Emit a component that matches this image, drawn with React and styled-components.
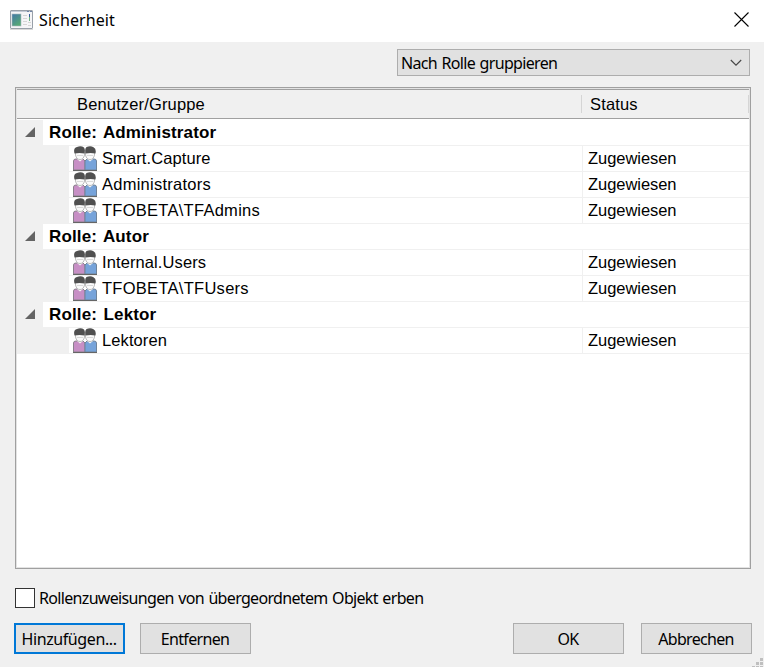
import React, { useState } from 'react';
import styled, { createGlobalStyle } from 'styled-components';

const GlobalStyle = createGlobalStyle`
  * {
    box-sizing: border-box;
  }

  body {
    margin: 0;
    background-color: #f0f0f0;
    overflow: hidden;
  }
`;

const Dialog = styled.div`
  width: 764px;
  height: 667px;
  background-color: #f0f0f0;
  color: #000;
  display: flex;
  flex-direction: column;
  position: relative;
  overflow: hidden;
  font-family: 'Noto Sans', 'Open Sans', sans-serif;
  font-size: 16px;
  white-space: nowrap;
`;

const TitleBar = styled.div`
  height: 42px;
  flex: none;
  background-color: #fff;
  display: flex;
  align-items: center;
  padding: 0 14px 3px 10px;
`;

const Title = styled.div`
  flex: 1;
  margin-left: 5px;
  padding-top: 1px;
  line-height: 24px;
  letter-spacing: 0.1px;
`;

const CloseButton = styled.button`
  width: 17px;
  height: 17px;
  padding: 0;
  border: none;
  background: none;
  display: flex;
`;

const Toolbar = styled.div`
  display: flex;
  justify-content: flex-end;
  padding: 7px 14px 11px;
`;

const Select = styled.div`
  width: 353px;
  height: 27px;
  padding: 0 7px 0 3px;
  background-color: #e1e1e1;
  border: 1px solid #adadad;
  display: flex;
  align-items: center;
  justify-content: space-between;
`;

const Label = styled.span`
  line-height: 22px;
  letter-spacing: -0.67px;
  word-spacing: 1px;
`;

const Tree = styled.div`
  width: 736px;
  height: 482px;
  flex: none;
  margin-left: 15px;
  padding: 1px;
  background-color: #e3e3e3;
  border: 1px solid #a0a0a0;
  font-family: 'Liberation Sans', Arial, sans-serif;
  font-size: 16.5px;
`;

const TreeContent = styled.div`
  height: 100%;
  background-color: #fff;
`;

const HeaderRow = styled.div`
  height: 30px;
  margin-bottom: 1px;
  background-color: #f0f0f0;
  border-top: 1px solid #a0a0a0;
  border-bottom: 1px solid #a0a0a0;
  display: flex;
  align-items: center;
`;

const HeaderCell = styled.div`
  width: ${(props) => props.$width}px;
  height: 18px;
  padding-left: ${(props) => props.$indent}px;
  border-right: 1px solid #d5d5d5;
  line-height: 18px;
  letter-spacing: 0.15px;
`;

const Row = styled.div`
  height: 26px;
  display: flex;
`;

const Gutter = styled.div`
  width: ${(props) => props.$width}px;
  background-color: #f0f0f0;
  display: flex;
  align-items: center;
  padding: 0 0 2px 8px;
`;

const GroupName = styled.div`
  flex: 1;
  padding-left: 6px;
  border-bottom: 1px solid #f0f0f0;
  font-size: 17px;
  font-weight: bold;
  line-height: 25px;
  letter-spacing: 0.15px;
  word-spacing: 1.5px;
`;

const NameCell = styled.div`
  width: 514px;
  padding-left: 4px;
  border-right: 1px solid #f0f0f0;
  border-bottom: 1px solid #f0f0f0;
  display: flex;
  align-items: center;
  gap: 5px;
  line-height: 25px;
  letter-spacing: ${(props) => props.$spacing}px;
`;

const StatusCell = styled.div`
  flex: 1;
  padding-left: 5px;
  border-bottom: 1px solid #f0f0f0;
  line-height: 25px;
  letter-spacing: -0.05px;
`;

const InheritOption = styled.label`
  height: 20px;
  margin: 19px 0 15px 15px;
  display: flex;
  align-items: center;
  gap: 4px;
`;

const Checkbox = styled.input`
  appearance: none;
  width: 20px;
  height: 20px;
  margin: 0;
  background-color: #fff;
  border: 1px solid #333;

  &:checked {
    background-color: #333;
  }
`;

const Footer = styled.div`
  display: flex;
  padding: 0 12px 0 14px;
`;

const Button = styled.button`
  width: 111px;
  height: 31px;
  padding: 0 1px 0 0;
  margin-left: ${(props) => props.$gap || 0}px;
  background-color: #e1e1e1;
  border: ${(props) => (props.$primary ? '2px solid #0078d7' : '1px solid #adadad')};
  color: #000;
  font: inherit;
  line-height: 22px;
  letter-spacing: ${(props) => props.$spacing || 0}px;
`;

const SizeGrip = styled.svg`
  position: absolute;
  right: 0;
  bottom: 0;
`;

const WindowIcon = () => (
  <svg width="24" height="20" viewBox="0 0 24 20">
    <defs>
      <linearGradient id="pane" x1="0" y1="0" x2="0.6" y2="1">
        <stop offset="0" stopColor="#4277a8" />
        <stop offset="1" stopColor="#55a875" />
      </linearGradient>
    </defs>
    <rect x="0.5" y="0.5" width="22" height="18" rx="0.5" fill="#f5f5f7" stroke="#99a0a9" />
    <path d="M1 1.5h21" stroke="#c3cad5" />
    <path d="M17 1.5h2M20 1.5h2" stroke="#7186a8" />
    <rect x="2" y="4" width="9" height="12" fill="url(#pane)" stroke="#aab9bf" strokeWidth="0.6" />
    <path d="M13 5.5h4M13 8.5h4M13 11.5h4M13 14.5h4M18 12.5h3M18 15.5h3" stroke="#d5d5d5" />
    <path d="M19.5 4v3" stroke="#365d9b" />
    <path d="M19.5 7v4" stroke="#69b281" />
    <path d="M0 19.5h23" stroke="#d9d9d9" />
  </svg>
);

const CloseIcon = () => (
  <svg width="17" height="17" viewBox="0 0 17 17">
    <path d="M1.5 1.5l14 14M15.5 1.5l-14 14" stroke="#000" strokeWidth="1.1" />
  </svg>
);

const ChevronIcon = () => (
  <svg width="12" height="8" viewBox="0 0 12 8">
    <path d="M0.8 1l5.2 5.2L11.2 1" fill="none" stroke="#444" strokeWidth="1.1" />
  </svg>
);

const ExpandedIcon = () => (
  <svg width="10" height="10" viewBox="0 0 10 10">
    <path d="M10 0v10H0z" fill="#646464" />
  </svg>
);

const UsersIcon = () => (
  <svg width="24" height="25" viewBox="0 0 24 25">
    <path d="M0.5 24V15q0-2 2.5-2h7l2 2v9z" fill="#c78fc5" stroke="#8a808c" />
    <path d="M12 24V15l2-2h7q2.5 0 2.5 2v9z" fill="#76a3da" stroke="#6f8399" />
    <path d="M0 24.5h24" stroke="#666" />
    <path d="M4 13l3 2.5 3-2.5zM14 13l3 2.5 3-2.5z" fill="#f5f5f5" />
    <path d="M2.5 6v3q1 4.5 4.5 4.5t4.5-4.5V6z" fill="#fafafa" stroke="#bbb" />
    <path d="M12.5 6v3q1 4.5 4.5 4.5t4.5-4.5V6z" fill="#fafafa" stroke="#bbb" />
    <path d="M1.5 7.5Q0 2 4 1q4-1.5 7 .5 1.5 2 .5 6-5-1-10 0z" fill="#505050" />
    <path d="M12.5 7.5q-1-5 1-6.5 4-1.5 7 .2 3 1.300 2 6.300-5-1-10 0z" fill="#505050" />
    <path d="M4 9.500h6M14 9.500h6" stroke="#ccc" strokeWidth="0.7" />
  </svg>
);

const roles = [
  {
    name: 'Administrator',
    members: [
      { name: 'Smart.Capture', spacing: 0.1 },
      { name: 'Administrators', spacing: 0.25 },
      { name: 'TFOBETA\\TFAdmins', spacing: 0.27 },
    ],
  },
  {
    name: 'Autor',
    members: [
      { name: 'Internal.Users', spacing: 0.1 },
      { name: 'TFOBETA\\TFUsers', spacing: 0.28 },
    ],
  },
  {
    name: 'Lektor',
    members: [{ name: 'Lektoren', spacing: 0.1 }],
  },
];

const App = () => {
  const [inherit, setInherit] = useState(false);

  return (
    <Dialog>
      <GlobalStyle />
      <TitleBar>
        <WindowIcon />
        <Title>Sicherheit</Title>
        <CloseButton aria-label="Schließen">
          <CloseIcon />
        </CloseButton>
      </TitleBar>

      <Toolbar>
        <Select>
          <Label>Nach Rolle gruppieren</Label>
          <ChevronIcon />
        </Select>
      </Toolbar>

      <Tree>
        <TreeContent>
          <HeaderRow>
            <HeaderCell $width={565} $indent={60}>Benutzer/Gruppe</HeaderCell>
            <HeaderCell $width={167} $indent={8}>Status</HeaderCell>
          </HeaderRow>

          {roles.map((role) => (
            <React.Fragment key={role.name}>
              <Row>
                <Gutter $width={26}>
                  <ExpandedIcon />
                </Gutter>
                <GroupName>Rolle: {role.name}</GroupName>
              </Row>
              {role.members.map((member) => (
                <Row key={member.name}>
                  <Gutter $width={52} />
                  <NameCell $spacing={member.spacing}>
                    <UsersIcon />
                    {member.name}
                  </NameCell>
                  <StatusCell>Zugewiesen</StatusCell>
                </Row>
              ))}
            </React.Fragment>
          ))}
        </TreeContent>
      </Tree>

      <InheritOption>
        <Checkbox type="checkbox" checked={inherit} onChange={(e) => setInherit(e.target.checked)} />
        <Label>Rollenzuweisungen von übergeordnetem Objekt erben</Label>
      </InheritOption>

      <Footer>
        <Button $primary $spacing={-0.4}>Hinzufügen...</Button>
        <Button $gap={15} $spacing={-0.65}>Entfernen</Button>
        <Button $gap={262} $spacing={-0.6}>OK</Button>
        <Button $gap={17} $spacing={-0.7}>Abbrechen</Button>
      </Footer>

      <SizeGrip width="12" height="10" viewBox="0 0 12 10">
        <path d="M8 1h3v3h-3zM4 5h3v3h-3zM8 5h3v3h-3zM0 9h3v1h-3zM4 9h3v1h-3zM8 9h3v1h-3z" fill="#bfbfbf" />
      </SizeGrip>
    </Dialog>
  );
};

export default App;
